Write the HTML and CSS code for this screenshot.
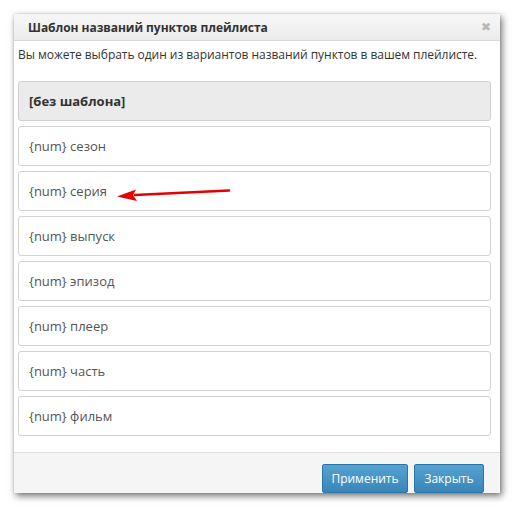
FILE: index.html
```html
<!DOCTYPE html>
<html lang="ru">
<head>
<meta charset="utf-8">
<title>Шаблон названий пунктов плейлиста</title>
<link rel="stylesheet" href="styles.css">
</head>
<body>
<div class="dialog">
  <div class="dlg-header">
    <span class="dlg-title">Шаблон названий пунктов плейлиста</span>
    <span class="dlg-close">&#x2716;</span>
  </div>
  <div class="dlg-body">
    <p class="desc">Вы можете выбрать один из вариантов названий пунктов в вашем плейлисте.</p>
    <ul class="options">
      <li class="opt opt-active">[без шаблона]</li>
      <li class="opt">{num} сезон</li>
      <li class="opt">{num} серия</li>
      <li class="opt">{num} выпуск</li>
      <li class="opt">{num} эпизод</li>
      <li class="opt">{num} плеер</li>
      <li class="opt">{num} часть</li>
      <li class="opt">{num} фильм</li>
    </ul>
  </div>
  <div class="dlg-footer">
    <button class="btn btn-apply">Применить</button>
    <button class="btn btn-close">Закрыть</button>
  </div>
</div>
<svg class="arrow" width="130" height="20" viewBox="0 0 130 20">
  <path d="M118 5.5 L24 10" stroke="#e60000" stroke-width="2.6" stroke-linecap="round" fill="none"/>
  <path d="M6 11.5 L25 4.5 L22 10 L26 16 Z" fill="#e60000"/>
</svg>
</body>
</html>
```
FILE: styles.css
```css
html, body {
  margin: 0;
  padding: 0;
  background: #ffffff;
}
body {
  font-family: "Open Sans", "Noto Sans", sans-serif;
  color: #333;
  position: relative;
  width: 514px;
  height: 508px;
  overflow: hidden;
}
.dialog {
  position: absolute;
  left: 14px;
  top: 14px;
  width: 486px;
  background: #fff;
  box-shadow: 2px 3px 7px rgba(0,0,0,0.55), 0 0 2px rgba(0,0,0,0.15);
  display: flex;
  flex-direction: column;
}
.dlg-header {
  height: 26px;
  border-bottom: 1px solid #d8d8d8;
  background: linear-gradient(#f7f7f7, #ececec);
  display: flex;
  align-items: center;
  justify-content: space-between;
  padding: 0 9px 0 14px;
}
.dlg-title {
  font-size: 12px;
  font-weight: bold;
  color: #333;
  letter-spacing: -0.05px;
}
.dlg-close {
  font-size: 12px;
  color: #b8b8b8;
  font-family: "DejaVu Sans", sans-serif;
  font-weight: bold;
}
.dlg-body {
  padding: 4px 9px 16px 4px;
}
.desc {
  margin: 0 0 16px 0;
  font-size: 12px;
  letter-spacing: -0.04px;
  line-height: 20px;
  color: #333;
  white-space: nowrap;
}
.options {
  list-style: none;
  margin: 0;
  padding: 0;
  display: flex;
  flex-direction: column;
  gap: 5px;
}
.opt {
  height: 38px;
  line-height: 38px;
  border: 1px solid #d2d2d2;
  border-radius: 3px;
  padding-left: 10px;
  font-size: 13px;
  color: #555;
  background: #fff;
}
.opt-active {
  background: #ebebeb;
  font-weight: bold;
  color: #333;
  border-color: #cfcfcf;
}
.dlg-footer {
  border-top: 1px solid #dcdcdc;
  background: #f5f5f5;
  height: 40px;
  display: flex;
  justify-content: flex-end;
  align-items: flex-end;
  gap: 6px;
  padding-right: 16px;
}
.btn {
  height: 29px;
  border: 1px solid #2c76a6;
  border-radius: 2px;
  background: linear-gradient(#56a3d2, #3886b8);
  color: #fff;
  font-family: "Open Sans", "Noto Sans", sans-serif;
  font-size: 12px;
  padding: 0;
}
.btn-apply {
  width: 86px;
}
.btn-close {
  width: 70px;
}
.arrow {
  position: absolute;
  left: 111px;
  top: 185px;
}
```
